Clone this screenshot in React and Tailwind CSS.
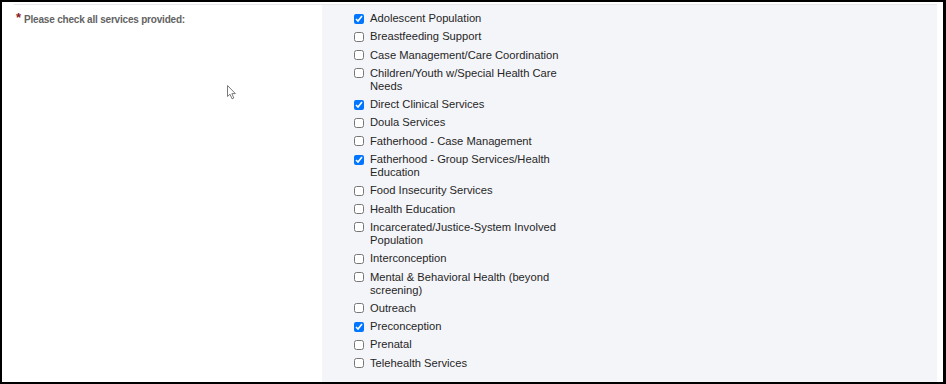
import React from "react";

const items = [
  ["Adolescent Population", true],
  ["Breastfeeding Support", false],
  ["Case Management/Care Coordination", false],
  ["Children/Youth w/Special Health Care Needs", false],
  ["Direct Clinical Services", true],
  ["Doula Services", false],
  ["Fatherhood - Case Management", false],
  ["Fatherhood - Group Services/Health Education", true],
  ["Food Insecurity Services", false],
  ["Health Education", false],
  ["Incarcerated/Justice-System Involved Population", false],
  ["Interconception", false],
  ["Mental & Behavioral Health (beyond screening)", false],
  ["Outreach", false],
  ["Preconception", true],
  ["Prenatal", false],
  ["Telehealth Services", false],
];

export default function App() {
  return (
    <div
      className="w-[946px] h-[384px] box-border bg-white border-black border-t-2 border-l-2 border-r-[3px] border-b-[2px] overflow-hidden"
      style={{ fontFamily: '"Liberation Sans", Arial, sans-serif' }}
    >
      <div className="ml-[12px] mr-[6px] mt-[2px] border-t border-[#e6e8ec] flex h-[378px]">
        <div className="w-[308px] relative pl-[2px] pt-[7px]">
          <div className="flex items-start">
            <span className="text-[#8b1a1a] text-[13px] font-bold leading-[12px] mr-[3px]">*</span>
            <span className="text-[#636363] text-[10px] tracking-[-0.2px] font-bold leading-[12px] mt-[2px]">
              Please check all services provided:
            </span>
          </div>
          <svg
            className="absolute left-[213px] top-[80px]"
            width="10"
            height="15"
            viewBox="0 0 10 15"
          >
            <path
              d="M0.5 0.5 L0.5 11.5 L3 9.2 L5 13.8 L6.8 13 L4.9 8.6 L8.4 8.6 Z"
              fill="#ffffff"
              stroke="#7a7a7a"
              strokeWidth="1"
              strokeLinejoin="round"
            />
          </svg>
        </div>
        <div className="flex-1 bg-[#f4f5f9] pl-[32px] pt-[7px]">
          <div className="flex flex-col gap-[5.3px]">
            {items.map(([label, checked]) => (
              <label key={label} className="flex items-start">
                <input
                  type="checkbox"
                  defaultChecked={checked}
                  className="m-0 w-[10px] h-[10px] mt-[1.5px] shrink-0"
                />
                <span className="ml-[6px] w-[194px] text-[11.2px] leading-[13px] text-[#262626]">
                  {label}
                </span>
              </label>
            ))}
          </div>
        </div>
      </div>
    </div>
  );
}
